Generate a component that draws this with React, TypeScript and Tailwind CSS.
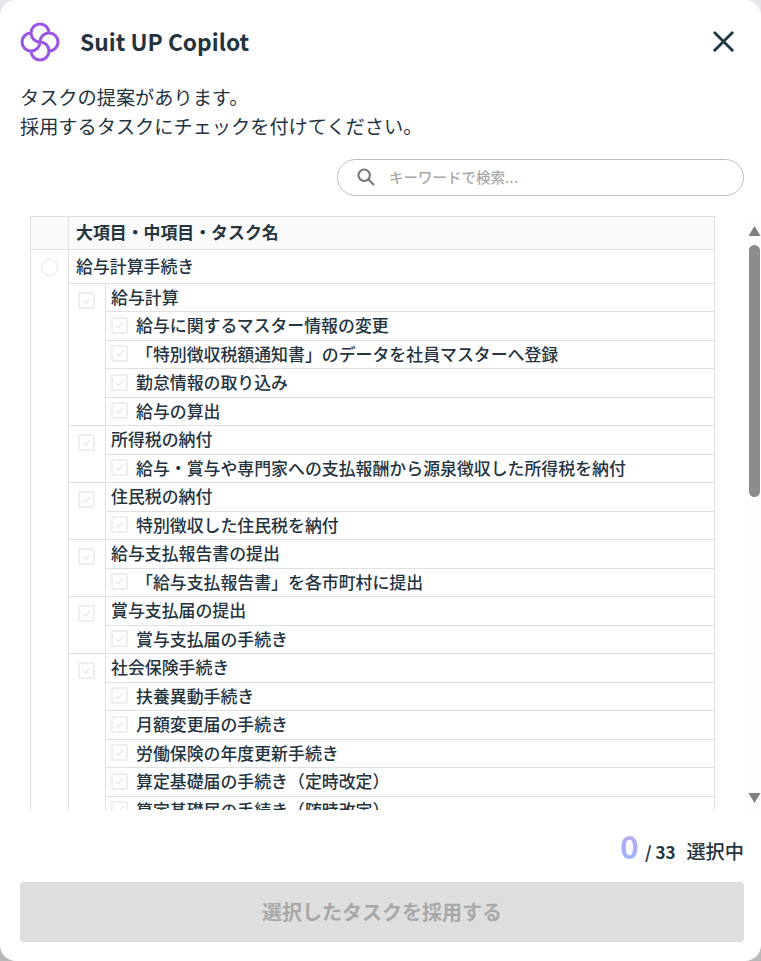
import React from "react";
import { X } from "lucide-react";

type Group = { name: string; tasks: string[] };

const GROUPS: Group[] = [
  {
    name: "給与計算",
    tasks: [
      "給与に関するマスター情報の変更",
      "「特別徴収税額通知書」のデータを社員マスターへ登録",
      "勤怠情報の取り込み",
      "給与の算出",
    ],
  },
  { name: "所得税の納付", tasks: ["給与・賞与や専門家への支払報酬から源泉徴収した所得税を納付"] },
  { name: "住民税の納付", tasks: ["特別徴収した住民税を納付"] },
  { name: "給与支払報告書の提出", tasks: ["「給与支払報告書」を各市町村に提出"] },
  { name: "賞与支払届の提出", tasks: ["賞与支払届の手続き"] },
  {
    name: "社会保険手続き",
    tasks: [
      "扶養異動手続き",
      "月額変更届の手続き",
      "労働保険の年度更新手続き",
      "算定基礎届の手続き（定時改定）",
      "算定基礎届の手続き（随時改定）",
    ],
  },
];

const CheckBox = () => (
  <span className="flex h-[17px] w-[17px] shrink-0 items-center justify-center rounded-[2px] border-2 border-[#eceef0] bg-white">
    <svg viewBox="0 0 12 12" className="h-[11px] w-[11px]" fill="none" stroke="#dcdfe2" strokeWidth="1.1">
      <path d="M2.2 6.2 5 9l5-6" />
    </svg>
  </span>
);

const Logo = () => (
  <svg viewBox="0 0 40 40" className="h-10 w-10" fill="none" stroke="#9b55e2" strokeWidth="3">
    <path d="M29 11A9 9 0 1 0 20 20" />
    <path d="M29 11A9 9 0 1 0 20 20" transform="rotate(90 20 20)" />
    <path d="M29 11A9 9 0 1 0 20 20" transform="rotate(180 20 20)" />
    <path d="M29 11A9 9 0 1 0 20 20" transform="rotate(270 20 20)" />
  </svg>
);

const TaskRow = ({ name }: { name: string }) => (
  <div className="flex h-[28.5px] items-center border-t border-[#e0e0e0] pb-[1.5px] pl-[5px] text-[16.9px] font-medium">
    <CheckBox />
    <span className="ml-[8px]">{name}</span>
  </div>
);

export default function App() {
  return (
    <div className="h-[961px] w-[761px] overflow-hidden bg-gradient-to-b from-[#e6e6ec] to-[#b8b8b8] font-['Noto_Sans_CJK_JP',sans-serif] text-[#24343f]">
      <div className="flex h-full flex-col rounded-[16px] bg-white">
        <header className="flex h-[83px] shrink-0 items-center justify-between pl-5 pr-[20px]">
          <div className="flex items-center gap-5">
            <Logo />
            <h1 className="mt-[1px] text-[22.8px] font-bold">Suit UP Copilot</h1>
          </div>
          <X className="h-[35px] w-[35px]" strokeWidth={2} color="#1f3a45" />
        </header>

        <p className="px-[20px] text-[19.2px] leading-[28.8px]">
          タスクの提案があります。
          <br />
          採用するタスクにチェックを付けてください。
        </p>

        <div className="mt-[18px] flex justify-end pr-[17px]">
          <div className="flex h-[37px] w-[407px] items-center rounded-full border border-[#bdbdbd] pl-[18px]">
            <svg viewBox="0 0 20 20" className="h-[20px] w-[20px]" fill="none" stroke="#757575" strokeWidth="2">
              <circle cx="8.2" cy="8.2" r="5.7" />
              <path d="m12.5 12.5 5.5 5.5" />
            </svg>
            <span className="ml-[13px] text-[14.5px] font-medium text-[#a8a8a8]">キーワードで検索...</span>
          </div>
        </div>

        <div className="mt-[20px] flex h-[594px] shrink-0">
          <div className="ml-[30px] w-[685px] overflow-hidden">
            <div className="border-x border-t border-[#e0e0e0]">
              <div className="flex h-[32px] bg-[#fafafa] text-[16.9px] font-bold">
                <div className="w-[38px] border-r border-[#e0e0e0]" />
                <div className="flex items-center pb-[1px] pl-[7px]">大項目・中項目・タスク名</div>
              </div>
              <div className="flex border-t border-[#e0e0e0]">
                <div className="flex w-[38px] shrink-0 justify-center border-r border-[#e0e0e0] pt-[9px]">
                  <span className="h-[17px] w-[17px] rounded-full border border-[#e0e2e4]" />
                </div>
                <div className="min-w-0 flex-1">
                  <div className="flex h-[33px] items-center pl-[7px] text-[16.9px] font-medium">給与計算手続き</div>
                  {GROUPS.map((group) => (
                    <div key={group.name} className="flex border-t border-[#e0e0e0]">
                      <div className="flex w-[37px] shrink-0 justify-start border-r border-[#e0e0e0] pl-[9px] pt-[8px]">
                        <CheckBox />
                      </div>
                      <div className="min-w-0 flex-1">
                        <div className="flex h-[27.5px] items-center pb-[1.5px] pl-[5px] text-[16.9px] font-medium">{group.name}</div>
                        {group.tasks.map((task) => (
                          <TaskRow key={task} name={task} />
                        ))}
                      </div>
                    </div>
                  ))}
                </div>
              </div>
            </div>
          </div>

          <div className="ml-auto flex w-[16px] flex-col items-center bg-[#fdfdfd] pl-[3px]">
            <svg viewBox="0 0 12 10" className="mt-[10px] h-[10px] w-[13px]" fill="#808080">
              <path d="M6 0 12 10H0Z" />
            </svg>
            <div className="mt-[9px] h-[252px] w-[11px] rounded-full bg-[#8c8c8c]" />
            <svg viewBox="0 0 12 10" className="mt-auto mb-[7px] h-[10px] w-[13px]" fill="#808080">
              <path d="M0 0H12L6 10Z" />
            </svg>
          </div>
        </div>

        <div className="mt-[12px] flex h-[46px] items-baseline justify-end pr-[17px] font-medium">
          <span className="bg-gradient-to-b from-[#c3a5f5] to-[#8fb8fb] bg-clip-text text-[32px] font-bold leading-[46px] text-transparent">0</span>
          <span className="ml-[6px] text-[17px] font-bold">/ 33</span>
          <span className="ml-[11px] text-[19.2px]">選択中</span>
        </div>

        <button className="ml-5 mt-[14px] h-[60px] w-[724px] rounded-[4px] bg-[#dedede] text-[20px] font-bold text-[#a8a8a8]">
          選択したタスクを採用する
        </button>
      </div>
    </div>
  );
}
